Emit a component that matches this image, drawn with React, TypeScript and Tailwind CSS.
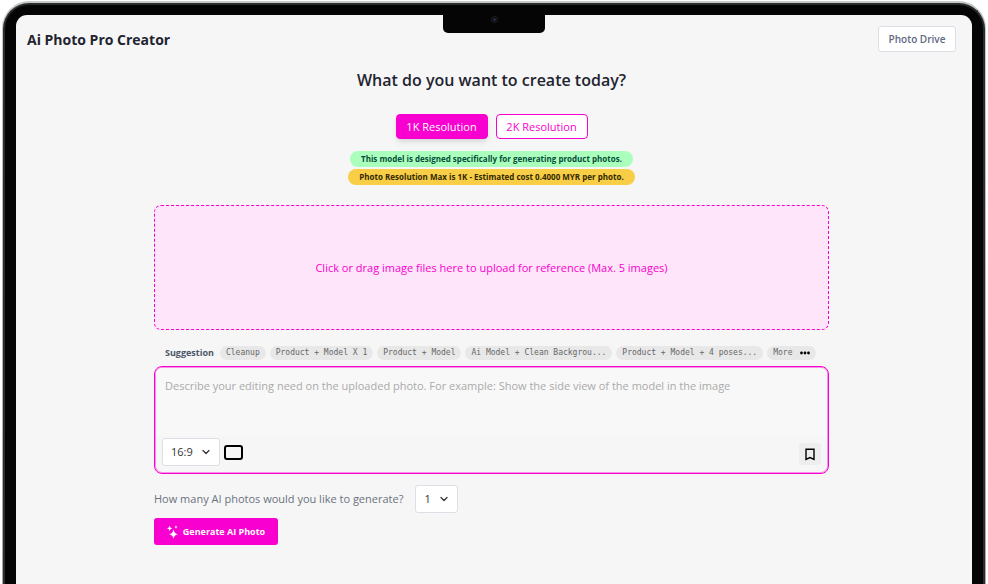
import { useState, type ReactNode } from 'react';
import { ChevronDown } from 'lucide-react';

const suggestions = [
  'Cleanup',
  'Product + Model X 1',
  'Product + Model',
  'Ai Model + Clean Backgrou...',
  'Product + Model + 4 poses...',
];

function Picker({ label, value, options, onChange, className }: {
  label: string;
  value: string;
  options: string[];
  onChange: (value: string) => void;
  className: string;
}) {
  return (
    <div className={`relative ${className}`}>
      <select
        aria-label={label}
        value={value}
        onChange={(e) => onChange(e.target.value)}
        className="h-full w-full appearance-none rounded-[3px] border border-[#dcdfe6] bg-white pl-2 text-[11px] text-[#333]"
      >
        {options.map((o) => <option key={o}>{o}</option>)}
      </select>
      <ChevronDown className="pointer-events-none absolute top-1/2 right-2 size-3 -translate-y-1/2 text-[#333]" strokeWidth={2.5} />
    </div>
  );
}

function Chip({ children }: { children: ReactNode }) {
  return (
    <button className="flex h-[14px] shrink-0 items-center gap-2 rounded-full bg-[#e8e8e8] px-[6px] font-['DejaVu_Sans_Mono',monospace] text-[8px] whitespace-nowrap text-[#666]">
      {children}
    </button>
  );
}

function Header() {
  return (
    <header className="flex items-center justify-between">
      <div className="text-[14px] font-bold text-[#1f2430]">Ai Photo Pro Creator</div>
      <button className="h-[26px] w-[78px] rounded-[3px] border border-[#dcdfe6] bg-white text-[10px] font-semibold text-[#606880]">
        Photo Drive
      </button>
    </header>
  );
}

function Sparkles() {
  return (
    <svg viewBox="0 0 12 14" className="h-[14px] w-3" fill="currentColor" aria-hidden="true">
      <path d="M6.5 4.5Q7.2 8.5 11 9.2Q7.2 9.9 6.5 13.8Q5.8 9.9 2 9.2Q5.8 8.5 6.5 4.5Z" />
      <path d="M2.6 0.8Q3 3 5.1 3.4Q3 3.8 2.6 6Q2.2 3.8 0.1 3.4Q2.2 3 2.6 0.8Z" />
      <path d="M9 0.3Q9.2 1.7 10.6 2Q9.2 2.3 9 3.7Q8.8 2.3 7.4 2Q8.8 1.7 9 0.3Z" />
    </svg>
  );
}

export default function App() {
  const [resolution, setResolution] = useState('1K');
  const [ratio, setRatio] = useState('16:9');
  const [count, setCount] = useState('1');

  return (
    <div className="flex h-screen overflow-hidden bg-white px-[2px] pt-px font-['Open_Sans',sans-serif]">
      <div className="flex grow rounded-t-[27px] bg-linear-to-b from-[#c5cac9] to-[#a8a8a8] px-px pt-[2px]">
        <div className="relative flex grow rounded-t-[26px] border-x-2 border-t-2 border-[#2b2d2d] bg-[#050505] pt-[10px] pr-[11px] pl-[11px]">
          <div className="absolute top-0 left-1/2 flex h-7 w-[102px] -translate-x-1/2 justify-center rounded-b-[5px] bg-[#050505] pt-[11px]">
            <span className="flex size-[7px] items-center justify-center rounded-full border border-[#222]">
              <span className="size-[3px] rounded-full bg-[#243048]" />
            </span>
          </div>

          <div className="grow rounded-t-[11px] bg-[#f6f6f6] pt-[11px] pr-4 pl-[11px]">
            <Header />

            <main className="mx-auto flex w-full max-w-[675px] flex-col pt-4">
              <h1 className="text-center text-[16px] leading-6 font-semibold text-[#1f2430]">What do you want to create today?</h1>

              <div className="flex justify-center gap-2 pt-[22px]">
                {['1K', '2K'].map((r) => (
                  <button
                    key={r}
                    onClick={() => setResolution(r)}
                    aria-pressed={resolution === r}
                    className={`h-[25px] w-[92px] rounded-[4px] border border-[#f800d0] pt-0.5 text-[11px] ${
                      resolution === r ? 'bg-[#f800d0] text-white shadow-md' : 'bg-white text-[#f800d0]'
                    }`}
                  >
                    {r} Resolution
                  </button>
                ))}
              </div>

              <div className="flex flex-col items-center gap-0.5 pt-3 text-[8px] leading-4 font-bold whitespace-nowrap">
                <p className="rounded-full bg-[#abffbd] px-[11px] text-[#064e3b]">This model is designed specifically for generating product photos.</p>
                <p className="rounded-full bg-[#f7ce46] px-[11px] text-[#332800]">Photo Resolution Max is 1K - Estimated cost 0.4000 MYR per photo.</p>
              </div>

              <label className="mt-5 flex h-[125px] items-center justify-center rounded-[7px] border border-dashed border-[#f800d0] bg-[#ffe5fa] pt-0.5 text-[11px] text-[#f800d0]">
                <input type="file" multiple accept="image/*" className="sr-only" />
                Click or drag image files here to upload for reference (Max. 5 images)
              </label>

              <div className="flex items-center gap-1 pt-4 pr-2 pl-[11px]">
                <span className="pr-0.5 text-[9px] leading-[14px] font-bold text-[#4b5568]">Suggestion</span>
                {suggestions.map((s) => <Chip key={s}>{s}</Chip>)}
                <Chip>
                  More
                  <svg viewBox="0 0 10 4" className="h-1 w-[10px]" fill="#000" aria-hidden="true">
                    <circle cx="1.5" cy="2" r="1.4" />
                    <circle cx="5" cy="2" r="1.4" />
                    <circle cx="8.5" cy="2" r="1.4" />
                  </svg>
                </Chip>
              </div>

              <div className="mt-[6px] flex flex-col rounded-[8px] border border-[#f800d0] bg-[#f6f6f6] p-px shadow-[inset_0_0_0_1px_#f800d066]">
                <textarea
                  aria-label="Editing description"
                  placeholder="Describe your editing need on the uploaded photo. For example: Show the side view of the model in the image"
                  className="block h-[68px] resize-none rounded-t-[6px] bg-[#f8f8f8] px-[9px] pt-[10px] text-[11px] leading-4 outline-none placeholder:text-[#aaa]"
                />
                <div className="flex items-center px-[6px] pt-[2px] pb-[6px]">
                  <Picker label="Aspect ratio" value={ratio} options={['16:9', '9:16', '1:1', '4:3']} onChange={setRatio} className="h-7 w-[58px]" />
                  <span className="ml-1 h-[15px] w-[19px] rounded-[3px] border-2 border-black" />
                  <button aria-label="Save prompt" className="mt-1 ml-auto flex size-[22px] items-center justify-center rounded-[4px] bg-[#eee]">
                    <svg viewBox="0 0 10 13" className="h-[13px] w-[10px]" fill="none" stroke="#000" strokeWidth="1.4" aria-hidden="true">
                      <path d="M1 1.2H9V11.5L5 9.6L1 11.5Z" />
                    </svg>
                  </button>
                </div>
              </div>

              <div className="flex items-center gap-3 pt-[11px]">
                <span className="text-[11px] text-[#6b7280]">How many AI photos would you like to generate?</span>
                <Picker label="Number of photos" value={count} options={['1', '2', '3', '4']} onChange={setCount} className="h-7 w-[43px]" />
              </div>

              <button className="mt-[5px] flex h-[27px] w-[124px] items-center justify-center gap-1 rounded-[3px] bg-[#f800d0] text-[9px] font-bold whitespace-nowrap text-white">
                <Sparkles />
                Generate AI Photo
              </button>
            </main>
          </div>
        </div>
      </div>
    </div>
  );
}
